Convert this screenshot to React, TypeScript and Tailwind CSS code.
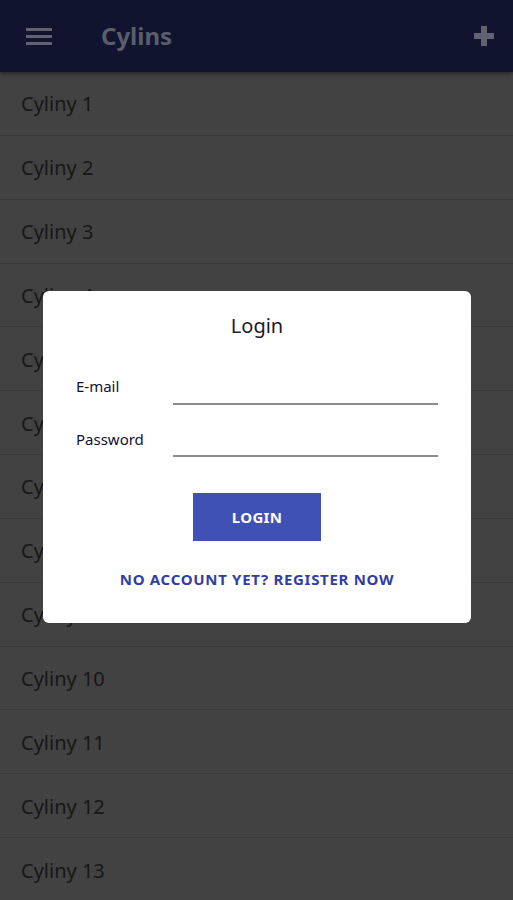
import React from "react";

export default function App() {
  const items = Array.from({ length: 13 }, (_, i) => `Cyliny ${i + 1}`);
  return (
    <div
      className="relative w-[513px] h-[900px] overflow-hidden bg-[#424242]"
      style={{ fontFamily: '"Noto Sans", "Open Sans", sans-serif' }}
    >
      <header className="h-[72px] bg-[#10142f] flex items-center shadow-[0_2px_4px_rgba(0,0,0,0.4)] relative z-10">
        <div className="ml-[26px] w-[26px] flex flex-col gap-[4px]">
          <div className="h-[3px] bg-[#5f6270]" />
          <div className="h-[3px] bg-[#5f6270]" />
          <div className="h-[3px] bg-[#5f6270]" />
        </div>
        <div className="ml-[49px] text-[24px] font-bold text-[#5a5e6b] leading-none -mt-[1px]">Cylins</div>
        <div className="ml-auto mr-[19px] relative w-[20px] h-[20px]">
          <div className="absolute left-[7px] top-0 w-[6px] h-[20px] bg-[#5f6270]" />
          <div className="absolute top-[7px] left-0 h-[6px] w-[20px] bg-[#5f6270]" />
        </div>
      </header>
      <div className="flex flex-col">
        {items.map((t) => (
          <div key={t} className="h-[63.85px] flex items-center border-b border-[#393939] pl-[21px] pt-[2px] text-[20px] text-[#171717] shrink-0">
            {t}
          </div>
        ))}
      </div>
      <div className="absolute left-[43px] top-[291px] w-[428px] h-[332px] bg-white rounded-[6px] flex flex-col items-center">
        <div className="mt-[22px] text-[20px] text-[#1b1b2b] leading-[26px]">Login</div>
        <div className="w-full mt-[37px] px-[33px] flex flex-col">
          <div className="flex items-end">
            <div className="w-[97px] text-[15px] leading-[20px] text-[#111133] pb-[9px]">E-mail</div>
            <div className="flex-1 h-[26px] border-b-2 border-[#8c8c8c]" />
          </div>
          <div className="flex items-end mt-[24px]">
            <div className="w-[97px] text-[15px] leading-[20px] text-[#111133] pb-[8px]">Password</div>
            <div className="flex-1 h-[26px] border-b-2 border-[#8c8c8c]" />
          </div>
        </div>
        <button className="mt-[36px] w-[128px] h-[48px] bg-[#3f51b5] text-white text-[15px] font-bold tracking-[0.3px] flex items-center justify-center">
          LOGIN
        </button>
        <div className="mt-[27px] text-[15px] font-bold text-[#2f3ea6] tracking-[0.7px]">NO ACCOUNT YET? REGISTER NOW</div>
      </div>
    </div>
  );
}
